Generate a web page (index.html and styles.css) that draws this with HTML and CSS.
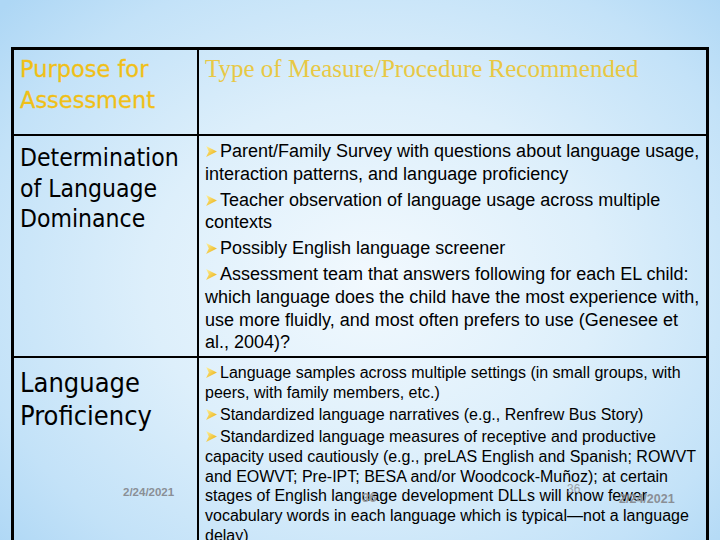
FILE: index.html
```html
<!DOCTYPE html>
<html>
<head>
<meta charset="utf-8">
<link rel="stylesheet" href="styles.css">
</head>
<body>
<div class="slide">
  <div class="table">
    <div class="cell left head-row"><div class="head-left">Purpose for Assessment</div></div>
    <div class="cell right head-row"><div class="head-right">Type of Measure/Procedure Recommended</div></div>

    <div class="cell left row2"><div class="purpose p1">Determination of Language Dominance</div></div>
    <div class="cell right row2">
      <ul class="items big">
        <li><svg class="bullet" viewBox="0 0 12 12"><defs><linearGradient id="g1" x1="0" y1="0" x2="1" y2="1"><stop offset="0" stop-color="#fff3a0"/><stop offset="1" stop-color="#e8a800"/></linearGradient></defs><polygon points="1,1 11,6 1,11 3.5,6" fill="url(#g1)"/></svg>Parent/Family Survey with questions about language usage, interaction patterns, and language proficiency</li>
        <li><svg class="bullet" viewBox="0 0 12 12"><polygon points="1,1 11,6 1,11 3.5,6" fill="url(#g1)"/></svg>Teacher observation of language usage across multiple contexts</li>
        <li><svg class="bullet" viewBox="0 0 12 12"><polygon points="1,1 11,6 1,11 3.5,6" fill="url(#g1)"/></svg>Possibly English language screener</li>
        <li><svg class="bullet" viewBox="0 0 12 12"><polygon points="1,1 11,6 1,11 3.5,6" fill="url(#g1)"/></svg>Assessment team that answers following for each EL child: which language does the child have the most experience with, use more fluidly, and most often prefers to use (Genesee et al., 2004)?</li>
      </ul>
    </div>

    <div class="cell left row3"><div class="purpose p2">Language Proficiency</div></div>
    <div class="cell right row3">
      <ul class="items small">
        <li><svg class="bullet" viewBox="0 0 12 12"><polygon points="1,1 11,6 1,11 3.5,6" fill="url(#g1)"/></svg>Language samples across multiple settings (in small groups, with peers, with family members, etc.)</li>
        <li><svg class="bullet" viewBox="0 0 12 12"><polygon points="1,1 11,6 1,11 3.5,6" fill="url(#g1)"/></svg>Standardized language narratives (e.g., Renfrew Bus Story)</li>
        <li><svg class="bullet" viewBox="0 0 12 12"><polygon points="1,1 11,6 1,11 3.5,6" fill="url(#g1)"/></svg>Standardized language measures of receptive and productive capacity used cautiously (e.g., preLAS English and Spanish; ROWVT and EOWVT; Pre-IPT; BESA and/or Woodcock-Muñoz); at certain stages of English language development DLLs will know fewer vocabulary words in each language which is typical—not a language delay)</li>
      </ul>
    </div>
  </div>
  <div class="stamp date-left">2/24/2021</div>
  <div class="stamp num-a">36</div>
  <div class="stamp num-b">36</div>
  <div class="stamp date-right">2/24/2021</div>
</div>
</body>
</html>
```
FILE: styles.css
```css
html, body {
  margin: 0;
  padding: 0;
}
.slide {
  position: relative;
  width: 720px;
  height: 540px;
  overflow: hidden;
  background:
    radial-gradient(ellipse 70% 75% at 52% 52%, #f2f9fe 0%, #ddeffb 45%, #c3e2f8 80%, #aed7f5 100%);
}
.table {
  margin: 47px 0 0 11px;
  width: 692px;
  border: 3px solid #000;
  border-bottom: none;
  display: grid;
  grid-template-columns: 185px 507px;
  grid-template-rows: 86px 222px 200px;
}
.cell {
  box-sizing: border-box;
}
.left {
  border-right: 2px solid #000;
  padding-left: 6px;
}
.head-row, .row2 {
  border-bottom: 2px solid #000;
}
.head-left {
  font-family: "DejaVu Sans", sans-serif;
  font-size: 22.5px;
  line-height: 31px;
  color: #f0c018;
  padding-top: 4px;
  -webkit-text-stroke: 0.3px #f0c018;
}
.head-right {
  font-family: "Liberation Serif", serif;
  font-size: 25px;
  line-height: 31px;
  color: #e8c844;
  padding: 3px 0 0 6px;
}
.purpose {
  font-family: "DejaVu Sans Condensed", "DejaVu Sans", sans-serif;
  color: #000;
}
.p1 {
  font-size: 24.5px;
  line-height: 30.5px;
  padding-top: 7px;
}
.p2 {
  font-size: 27px;
  line-height: 33px;
  padding-top: 8px;
}
.items {
  list-style: none;
  margin: 0;
  padding: 0 4px 0 6px;
  font-family: "Liberation Sans", Arial, sans-serif;
  color: #000;
}
.items.big {
  font-size: 18px;
  line-height: 22.8px;
  padding-top: 4px;
}
.items.big li {
  margin-bottom: 3px;
}
.items.small {
  font-size: 16px;
  line-height: 19.7px;
  padding-top: 5px;
}
.items.small li {
  margin-bottom: 2.5px;
}
.bullet {
  width: 13px;
  height: 13px;
  margin-right: 2px;
  vertical-align: -1px;
}
.stamp {
  position: absolute;
  font-family: "Liberation Sans", Arial, sans-serif;
  font-weight: bold;
  color: #8a8f96;
}
.date-left {
  left: 123px;
  top: 486px;
  font-size: 11.5px;
}
.num-a {
  left: 362px;
  top: 490px;
  font-size: 13px;
  color: #9aa0a6;
}
.num-b {
  left: 567px;
  top: 482px;
  font-size: 12px;
  color: #9aa0a6;
  font-weight: normal;
}
.date-right {
  left: 619px;
  top: 492px;
  font-size: 12.5px;
}
```
